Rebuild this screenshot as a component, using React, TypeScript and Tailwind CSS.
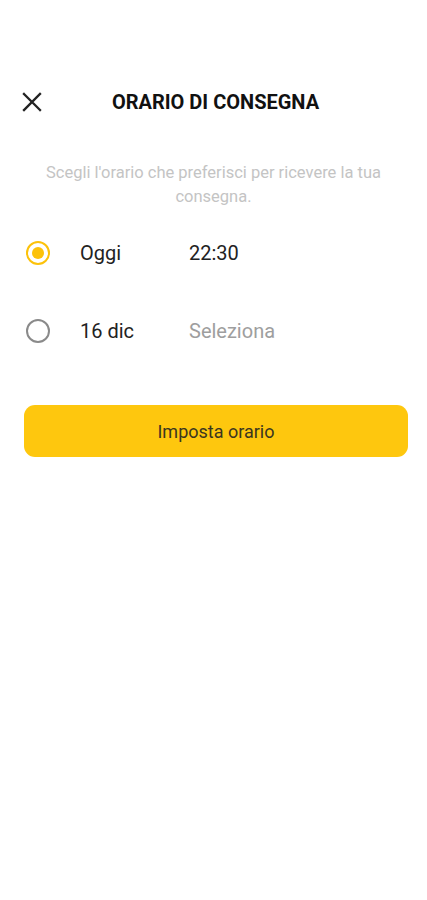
import { useState } from "react";

export default function App() {
  const [selected, setSelected] = useState("today");

  return (
    <div
      className="min-h-[900px] w-full bg-white pt-[82px]"
      style={{ fontFamily: "Roboto, 'Noto Sans', sans-serif" }}
    >
      {/* Header */}
      <div className="relative flex h-[40px] items-center justify-center">
        <button className="absolute left-[22px] top-[10px] flex h-[20px] w-[20px] items-center justify-center text-[#222]">
          <svg width="20" height="20" viewBox="0 0 20 20" fill="none">
            <path d="M2 2L18 18M18 2L2 18" stroke="currentColor" strokeWidth="2.3" strokeLinecap="square" />
          </svg>
        </button>
        <h1 className="pl-[4px] text-[20px] font-bold tracking-[0px] text-[#111]">ORARIO DI CONSEGNA</h1>
      </div>

      {/* Description */}
      <p className="mx-auto mt-[39px] w-[360px] text-center text-[16.5px] leading-[24px] text-[#c4c4c4]">
        Scegli l'orario che preferisci per ricevere la tua consegna.
      </p>

      {/* Options */}
      <div className="mt-[19px] flex flex-col">
        <label
          className="flex h-[50px] items-center"
          onClick={() => setSelected("today")}
        >
          <Radio checked={selected === "today"} />
          <span className="ml-[30px] w-[109px] text-[20px] text-[#222]">Oggi</span>
          <span className="text-[20px] text-[#222]">22:30</span>
        </label>
        <label
          className="mt-[28px] flex h-[50px] items-center"
          onClick={() => setSelected("date")}
        >
          <Radio checked={selected === "date"} />
          <span className="ml-[30px] w-[109px] text-[20px] text-[#222]">16 dic</span>
          <span className="text-[20px] text-[#9e9e9e]">Seleziona</span>
        </label>
      </div>

      {/* Action */}
      <div className="mt-[49px] px-[24px]">
        <button className="flex h-[52px] w-[384px] items-center justify-center rounded-[11px] bg-[#fec70e] text-[18px] font-normal text-[#3b3620]">
          Imposta orario
        </button>
      </div>
    </div>
  );
}

function Radio({ checked }: { checked: boolean }) {
  return (
    <span
      className={
        checked
          ? "ml-[26px] flex h-[24px] w-[24px] items-center justify-center rounded-full border-[2px] border-[#fcc20a]"
          : "ml-[26px] flex h-[24px] w-[24px] items-center justify-center rounded-full border-[2px] border-[#8a8a8a]"
      }
    >
      {checked && <span className="h-[12px] w-[12px] rounded-full bg-[#fcc20a]" />}
    </span>
  );
}
